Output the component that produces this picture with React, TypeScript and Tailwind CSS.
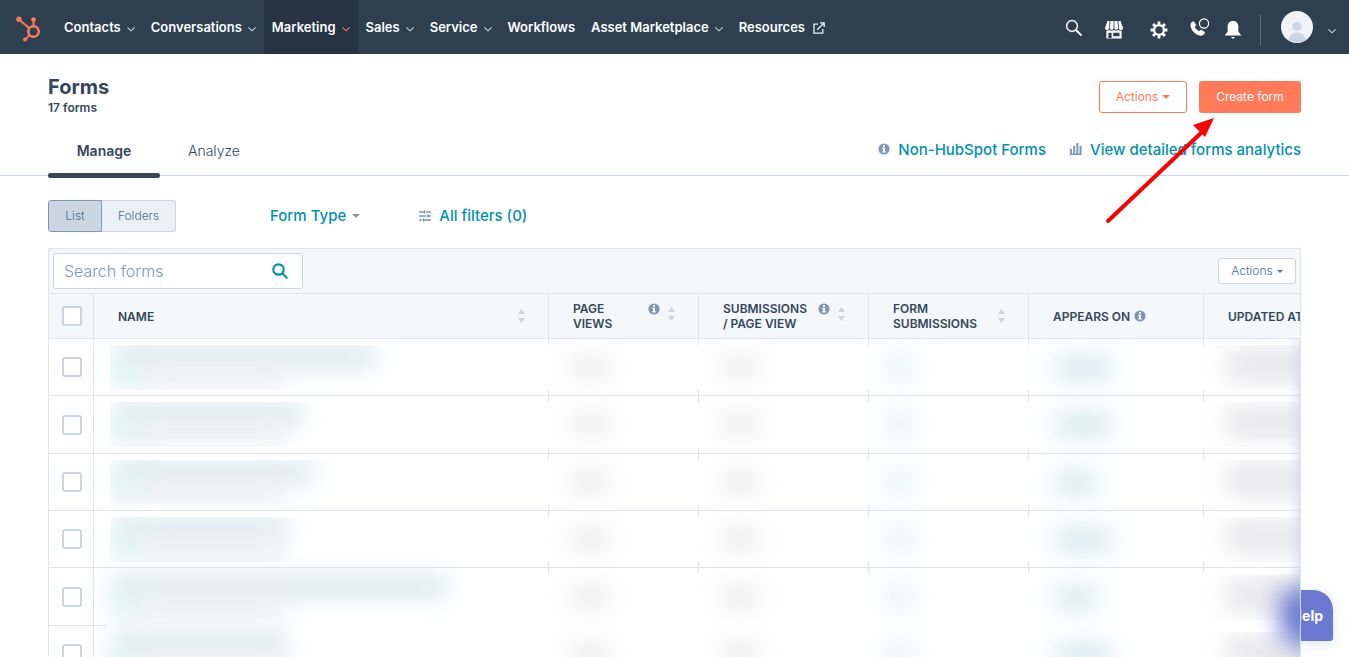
import React from "react";

interface FormRow {
  title: number;
  detail: number;
  appears: number;
}

const navItems = [
  { label: "Contacts", menu: true },
  { label: "Conversations", menu: true },
  { label: "Marketing", menu: true, active: true },
  { label: "Sales", menu: true },
  { label: "Service", menu: true },
  { label: "Workflows" },
  { label: "Asset Marketplace", menu: true },
  { label: "Resources", external: true },
];

// widths of the hidden text in each row
const rows: FormRow[] = [
  { title: 262, detail: 170, appears: 62 },
  { title: 188, detail: 170, appears: 62 },
  { title: 200, detail: 170, appears: 48 },
  { title: 172, detail: 170, appears: 62 },
  { title: 334, detail: 170, appears: 48 },
  { title: 172, detail: 170, appears: 62 },
];

const tick =
  "bg-[linear-gradient(#dfe3eb_6px,transparent_6px,transparent_calc(100%_-_5px),#dfe3eb_0)] bg-[length:1px_100%] bg-no-repeat";
const topTick =
  "bg-[linear-gradient(#dfe3eb,#dfe3eb)] bg-[length:1px_6px] bg-no-repeat";

const Chevron = ({ className = "" }: { className?: string }) => (
  <svg
    className={`h-2 w-2 ${className}`}
    viewBox="0 0 8 8"
    fill="none"
    stroke="currentColor"
    strokeWidth="1.1"
    aria-hidden="true"
  >
    <path d="M.4 2.4 4 5.8l3.6-3.4" />
  </svg>
);

const Caret = ({ className = "" }: { className?: string }) => (
  <svg
    className={className}
    viewBox="0 0 8 4"
    fill="currentColor"
    aria-hidden="true"
  >
    <path d="M0 0h8L4 4z" />
  </svg>
);

const Info = () => (
  <svg
    className="h-3 w-3 shrink-0 text-[#7c98b6]"
    viewBox="0 0 12 12"
    fill="currentColor"
    aria-hidden="true"
  >
    <circle cx="6" cy="6" r="5.6" />
    <path
      fill="#fff"
      d="M5 2h2v1.8H5zM4.2 4.8H7v3.4h.8v1.3H4.2V8.2H5V6.1h-.8z"
    />
  </svg>
);

const Sort = () => (
  <svg
    className="h-[14px] w-[7px] shrink-0 text-[#cbd6e2]"
    viewBox="0 0 7 14"
    fill="currentColor"
    aria-hidden="true"
  >
    <path d="M0 5h7L3.5 0zM0 9h7l-3.5 5z" />
  </svg>
);

const Logo = () => (
  <svg
    className="h-[26px] w-[26px]"
    viewBox="0 0 26 26"
    fill="none"
    stroke="#ff7a59"
    aria-hidden="true"
  >
    <circle cx="17.5" cy="15.5" r="5.2" strokeWidth="2.6" />
    <path d="M17.5 10V4M13.2 12 3.5 4M13.6 19.2 9.4 23.4" strokeWidth="1.9" />
    <circle cx="17.5" cy="3.6" r="2.4" fill="#ff7a59" stroke="none" />
    <circle cx="2.9" cy="3.2" r="2.7" fill="#ff7a59" stroke="none" />
    <circle cx="9" cy="23.6" r="2" fill="#ff7a59" stroke="none" />
  </svg>
);

const NavBar = () => (
  <header className="flex h-[54px] items-center bg-[#2e3f50] text-white">
    <a href="#" aria-label="Home" className="mt-1 mr-3.5 ml-4">
      <Logo />
    </a>
    <nav className="flex h-full flex-1 text-[13px] font-semibold">
      {navItems.map((item) => (
        <a
          key={item.label}
          href="#"
          className={`flex items-center gap-1.5 px-2 pt-0.5 whitespace-nowrap ${
            item.active ? "bg-[#253342]" : ""
          }`}
        >
          {item.label}
          {item.menu && (
            <Chevron
              className={`mt-0.5 ${
                item.active ? "text-[#ff7a59]" : "text-[#cbd6e2]"
              }`}
            />
          )}
          {item.external && (
            <svg
              className="ml-0.5 h-3 w-3"
              viewBox="0 0 12 12"
              fill="none"
              stroke="#eaf0f6"
              strokeWidth="1.3"
              aria-hidden="true"
            >
              <path d="M5 2.2H1v9h8.8V7M4.2 7.8l6.6-6.6M7 .8h4.2V5" />
            </svg>
          )}
        </a>
      ))}
    </nav>
    <div className="flex items-center pt-0.5 pr-[13px]">
      <button aria-label="Search" className="mr-[22px]">
        <svg
          className="h-[18px] w-[18px]"
          viewBox="0 0 18 18"
          fill="none"
          stroke="currentColor"
          aria-hidden="true"
        >
          <circle cx="7" cy="7" r="5.4" strokeWidth="1.5" />
          <path d="m11 11 5.6 5.6" strokeWidth="2" />
        </svg>
      </button>
      <button aria-label="Marketplace" className="mt-1 mr-[27px]">
        <svg
          className="h-[18px] w-[18px]"
          viewBox="0 0 18 18"
          fill="currentColor"
          aria-hidden="true"
        >
          <path d="M2.4 0h2.2L4 7.2A2 2 0 0 1 0 7zM5.5 0h3.1v7.2a2 2 0 0 1-3.9 0zM9.4 0h3.1l.8 7.2a2 2 0 0 1-3.9 0zM13.4 0h2.2L18 7a2 2 0 0 1-4 .2z" />
          <path
            fillRule="evenodd"
            d="M1.4 9.6c1 .2 2 0 2.9-.6 1.3.9 3 .9 4.7 0 1.3.9 3 .9 4.7 0 .9.6 1.9.8 2.9.6v7.900H1.400zM3.400 11.700V17h3.200v-5.300zM8.200 11.700v3.600h6.300v-3.600z"
          />
        </svg>
      </button>
      <button aria-label="Settings" className="mt-1 mr-[22px]">
        <svg
          className="h-[18px] w-[18px]"
          viewBox="0 0 18 18"
          fill="none"
          stroke="currentColor"
          aria-hidden="true"
        >
          <circle cx="9" cy="9" r="4.9" strokeWidth="2.3" />
          <path
            strokeWidth="2.8"
            d="M9 .6v3M9 14.400v3M.6 9h3M14.400 9h3M3.060 3.060l2.100 2.100M12.840 12.840l2.100 2.100M3.060 14.940l2.100-2.100M12.840 5.160l2.100-2.100"
          />
        </svg>
      </button>
      <button aria-label="Calling" className="mr-[15px]">
        <svg
          className="h-5 w-5"
          viewBox="0 0 20 20"
          fill="currentColor"
          aria-hidden="true"
        >
          <path d="M1.300 4.500 3.600 3l2.700 4-1.500 1.700c.8 2 2.300 3.500 4.300 4.400l1.800-1.400 4.100 2.400c-.5 2.300-2.100 3.700-4.300 3.600C5.700 17.500.8 12.300.500 7.300c0-1 .2-2 .8-2.800z" />
          <circle
            cx="14"
            cy="5.5"
            r="4.6"
            fill="none"
            stroke="currentColor"
            strokeWidth="1.2"
          />
        </svg>
      </button>
      <button aria-label="Notifications" className="mt-1 mr-[19px]">
        <svg
          className="h-[18px] w-4"
          viewBox="0 0 16 18"
          fill="currentColor"
          aria-hidden="true"
        >
          <path d="M8 0c3.600 0 5.400 2.500 5.400 5.500v5.300L16 14v.6H0V14l2.600-3.200V5.500C2.600 2.500 4.400 0 8 0zM6 16h4l-2 2z" />
        </svg>
      </button>
      <span className="mt-1 mr-5 h-[30px] w-px bg-[#516f90]" />
      <button
        aria-label="Account"
        className="-mt-0.5 flex items-center gap-[15px]"
      >
        <svg
          className="h-8 w-8 rounded-full"
          viewBox="0 0 32 32"
          aria-hidden="true"
        >
          <rect width="32" height="32" fill="#f0f4f8" />
          <circle cx="16" cy="15.5" r="4.6" fill="#cbd6e2" />
          <path d="M7 32c0-7 3.500-10.600 9-10.600S25 25 25 32z" fill="#cbd6e2" />
        </svg>
        <Chevron className="mt-2 text-[#cbd6e2]" />
      </button>
    </div>
  </header>
);

const Arrow = () => (
  <svg
    className="pointer-events-none absolute top-[62px] right-[133px] h-[108px] w-[112px]"
    viewBox="0 0 112 108"
    aria-hidden="true"
  >
    <path
      d="M4 105 97 17"
      stroke="#fe0000"
      strokeWidth="4"
      strokeLinecap="round"
    />
    <path d="M110 2 89 9l12 12z" fill="#fe0000" />
  </svg>
);

const PageHeader = () => (
  <section className="relative border-b border-[#cbd6e2] px-12">
    <div className="flex items-start justify-between pt-5">
      <div>
        <h1 className="text-xl leading-[26px] font-bold">Forms</h1>
        <p className="text-xs leading-4 font-semibold">17 forms</p>
      </div>
      <div className="flex gap-3 pt-[7px] text-xs">
        <button className="flex h-8 w-[88px] items-center justify-center gap-1 rounded-[3px] border border-[#ff7a59] text-[#ff7a59]">
          Actions
          <Caret className="h-1 w-2" />
        </button>
        <button className="h-8 w-[102px] rounded-[3px] bg-[#ff7a59] text-white">
          Create form
        </button>
      </div>
    </div>
    <div className="mt-3 flex justify-between text-sm">
      <div role="tablist" className="-mb-[3px] flex">
        <button
          role="tab"
          aria-selected="true"
          className="flex h-[50px] w-28 flex-col items-center justify-end gap-3 font-semibold"
        >
          Manage
          <span className="h-[5px] w-full rounded-[3px] bg-[#33475b]" />
        </button>
        <button
          role="tab"
          aria-selected="false"
          className="h-[46px] px-7 font-light"
        >
          Analyze
        </button>
      </div>
      <div className="flex items-center gap-6 pb-1 text-[15px] font-medium text-[#0091ae]">
        <a href="#" className="flex items-center gap-2">
          <Info />
          Non-HubSpot Forms
        </a>
        <a href="#" className="flex items-center gap-2">
          <svg
            className="h-3 w-3 text-[#7c98b6]"
            viewBox="0 0 12 12"
            fill="currentColor"
            aria-hidden="true"
          >
            <path d="M0 6h2v4.500h1.200V3h2v7.500h1.200V0h2v10.500h1.200V3h2v9H0z" />
          </svg>
          View detailed forms analytics
        </a>
      </div>
    </div>
    <Arrow />
  </section>
);

const Filters = () => (
  <div className="flex items-center px-12 pt-6 pb-4 text-[15px] font-medium">
    <div className="flex h-8 text-xs font-light text-[#506e91]">
      <button className="w-[54px] rounded-l-[3px] border border-[#7c98b6] bg-[#cbd6e2]">
        List
      </button>
      <button className="w-[74px] rounded-r-[3px] border border-l-0 border-[#cbd6e2] bg-[#eaf0f6]">
        Folders
      </button>
    </div>
    <button className="ml-[94px] flex items-center gap-1.5 text-[#0091ae]">
      Form Type
      <Caret className="h-1 w-2 text-[#7c98b6]" />
    </button>
    <button className="ml-[59px] flex items-center gap-2 text-[#0091ae]">
      <svg
        className="h-3 w-3 text-[#7c98b6]"
        viewBox="0 0 12 12"
        fill="none"
        stroke="currentColor"
        strokeWidth="1.3"
        aria-hidden="true"
      >
        <path d="M0 2h5M7 2h5M0 6h7.500M9.500 6H12M0 10h3M5 10h7M5.500.3v3.400M9 4.300v3.400M4.500 8.300v3.400" />
      </svg>
      All filters (0)
    </button>
  </div>
);

const Checkbox = ({ label }: { label: string }) => (
  <input
    type="checkbox"
    aria-label={label}
    className="ml-[13px] block h-5 w-5 appearance-none rounded-[3px] border-2 border-[#cbd6e2] bg-white"
  />
);

const Blob = ({ className }: { className: string }) => (
  <div className="relative h-[45px]">
    <span className={`absolute rounded-full blur-[12px] ${className}`} />
  </div>
);

const FormsTable = () => (
  <table className="w-full min-w-[1330px] table-fixed border-separate border-spacing-0 text-left">
    <colgroup>
      <col className="w-11" />
      <col />
      <col className="w-[150px]" />
      <col className="w-[170px]" />
      <col className="w-[160px]" />
      <col className="w-[175px]" />
      <col className="w-[176px]" />
    </colgroup>
    <thead>
      <tr className="h-[45px] bg-[#f5f8fa] text-xs leading-[15px] [&>th]:border-b [&>th]:border-[#dfe3eb] [&>th]:p-0 [&>th]:font-semibold [&>th+th]:border-l [&>th+th]:pr-[23px] [&>th+th]:pl-6">
        <th>
          <Checkbox label="Select all forms" />
        </th>
        <th>
          <div className="flex items-center justify-between">
            NAME
            <Sort />
          </div>
        </th>
        <th>
          <div className="flex items-start gap-2">
            <span className="flex-1">
              PAGE
              <br />
              VIEWS
            </span>
            <span className="pt-0.5">
              <Info />
            </span>
            <span className="pt-1.5">
              <Sort />
            </span>
          </div>
        </th>
        <th>
          <div className="flex items-start gap-2">
            <span className="flex-1 whitespace-nowrap">
              SUBMISSIONS
              <br />/ PAGE VIEW
            </span>
            <span className="pt-0.5">
              <Info />
            </span>
            <span className="pt-1.5">
              <Sort />
            </span>
          </div>
        </th>
        <th>
          <div className="flex items-center justify-between">
            <span>
              FORM
              <br />
              SUBMISSIONS
            </span>
            <Sort />
          </div>
        </th>
        <th>
          <div className="flex items-center gap-1">
            APPEARS ON
            <Info />
          </div>
        </th>
        <th className="whitespace-nowrap">UPDATED AT</th>
      </tr>
    </thead>
    <tbody>
      {rows.map((row, index) => {
        const open = index < 4;
        const cell = open
          ? `border-b border-[#dfe3eb] ${tick}`
          : index === 4
            ? topTick
            : "";
        return (
          <tr key={index} className="h-[57px] nth-[3n+2]:h-[58px]">
            <td className="border-b border-[#dfe3eb] p-0">
              <Checkbox label={`Select form ${index + 1}`} />
            </td>
            <td
              className={`relative border-l border-[#dfe3eb] ${
                open ? "border-b" : ""
              }`}
            >
              {index === 4 && (
                <span className="absolute bottom-0 left-0 h-px w-[13px] bg-[#dfe3eb]" />
              )}
              <div
                className={`relative ml-4 h-[45px] ${
                  open ? "overflow-hidden" : ""
                }`}
              >
                <span
                  className="absolute top-0 left-1 h-6 bg-[#dcebf0] blur-[11px]"
                  style={{ width: row.title }}
                />
                <span
                  className="absolute top-5 left-6 h-[22px] bg-[#eeeef2] blur-[11px]"
                  style={{ width: row.detail - 20 }}
                />
                <span className="absolute top-4 left-0 h-6 w-8 bg-[#daf4f0] blur-[11px]" />
              </div>
            </td>
            <td className={cell}>
              <Blob className="top-3 left-5 h-5 w-11 bg-[#e9e9eb]" />
            </td>
            <td className={cell}>
              <Blob className="top-3 left-5 h-5 w-11 bg-[#e9e9eb]" />
            </td>
            <td className={cell}>
              <Blob className="top-2.5 left-4 h-6 w-8 bg-[#e2f0f5]" />
            </td>
            <td className={cell}>
              <div className="relative h-[45px]">
                <span
                  className="absolute top-3 left-6 h-[22px] rounded-full bg-[#d0e8ee] blur-[12px]"
                  style={{ width: row.appears }}
                />
              </div>
            </td>
            <td className={cell}>
              <div className="relative h-[45px] overflow-hidden">
                <span className="absolute top-1 left-6 h-8 w-40 bg-[#e6e6e9] blur-[12px]" />
              </div>
            </td>
          </tr>
        );
      })}
    </tbody>
  </table>
);

export default function App() {
  return (
    <div className="relative flex h-screen flex-col overflow-hidden bg-white font-['Inter',sans-serif] text-[#33475b]">
      <NavBar />
      <PageHeader />
      <Filters />
      <main className="relative mx-12 min-h-0 flex-1 overflow-hidden border border-b-0 border-[#dfe3eb]">
        <div className="flex items-center justify-between border-b border-[#dfe3eb] bg-[#f5f8fa] p-1">
          <label className="flex h-9 w-[250px] items-center rounded-[3px] border border-[#cbd6e2] bg-white pr-3.5 pl-2.5">
            <input
              type="search"
              placeholder="Search forms"
              aria-label="Search forms"
              className="min-w-0 flex-1 text-base font-light outline-none placeholder:text-[#7c98b6]"
            />
            <svg
              className="h-4 w-4"
              viewBox="0 0 16 16"
              fill="none"
              stroke="#0091ae"
              strokeWidth="2.2"
              aria-hidden="true"
            >
              <circle cx="6.5" cy="6.5" r="5.2" />
              <path d="m10.300 10.300 5 5" />
            </svg>
          </label>
          <button className="flex h-[26px] w-[78px] items-center justify-center gap-1 rounded-[3px] border border-[#cbd6e2] bg-white text-xs font-light text-[#506e91]">
            Actions
            <Caret className="h-[3px] w-1.5" />
          </button>
        </div>
        <FormsTable />
        <span className="pointer-events-none absolute top-[90px] right-0 bottom-0 w-3 bg-linear-to-r from-transparent to-[#cbd6e2]/50" />
        <span className="pointer-events-none absolute -right-4 bottom-3 h-[58px] w-9 rounded-full bg-[#6a78d1] blur-[12px]" />
      </main>
      <button
        aria-label="Help"
        className="absolute right-4 bottom-4 flex h-[51px] w-8 items-center justify-end overflow-hidden rounded-tr-[20px] rounded-br-[3px] bg-[#6a78d1] pr-2.5 text-sm font-bold text-white shadow-[0_2px_14px_rgba(0,80,90,0.15)]"
      >
        Help
      </button>
    </div>
  );
}
